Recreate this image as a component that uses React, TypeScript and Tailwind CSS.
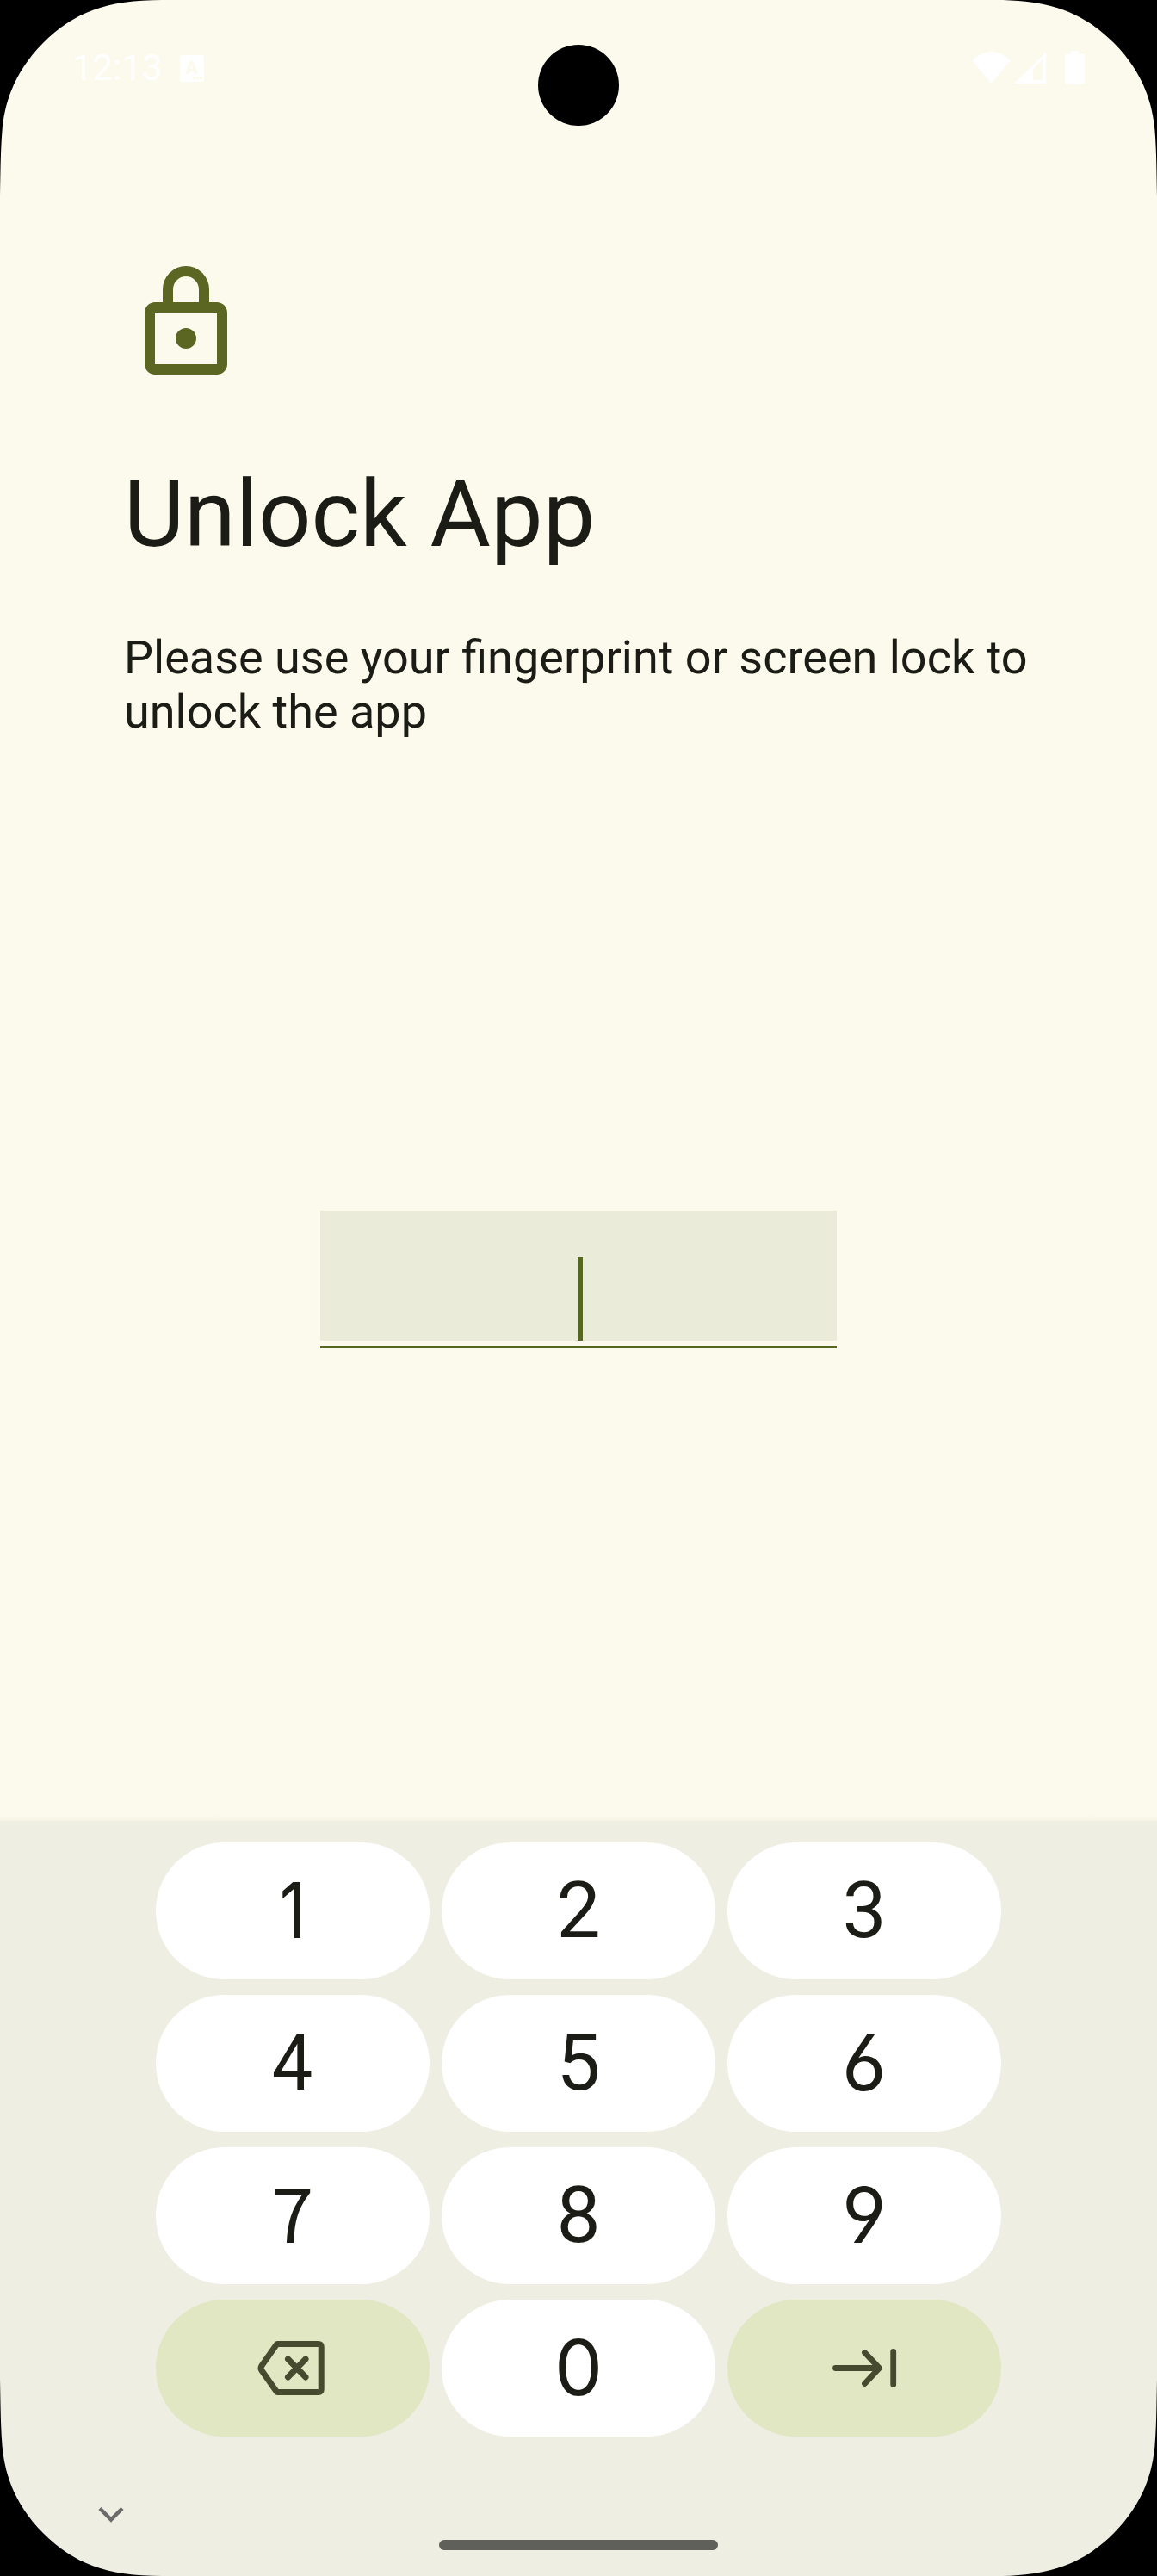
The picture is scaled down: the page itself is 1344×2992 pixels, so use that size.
const keys = ["1", "2", "3", "4", "5", "6", "7", "8", "9", "back", "0", "next"];

const inter = "font-['Inter',sans-serif] text-[89px] -translate-y-px";
const roboto = "font-['Roboto',sans-serif] text-[91px]";
const digitStyles: Record<string, string> = {
  "0": inter,
  "1": "font-['Inter',sans-serif] text-[89px] -translate-y-px scale-x-[0.85]",
  "2": roboto,
  "3": roboto,
  "4": "font-['Roboto',sans-serif] text-[91px] scale-x-[0.93]",
  "5": roboto,
  "6": "font-['Inter',sans-serif] text-[89px] -translate-y-px [font-feature-settings:'cv03']",
  "7": "font-['Noto_Sans_CJK_JP',sans-serif] text-[88px] -translate-y-[7px]",
  "8": roboto,
  "9": "font-['Inter',sans-serif] text-[89px] -translate-y-px [font-feature-settings:'cv04']",
};

function Corner({ className }: { className: string }) {
  return (
    <svg className={`absolute h-[230px] w-[190px] ${className}`} viewBox="0 0 190 230" fill="#000">
      <path d="M0 0V228C0.6 200 0.6 175 2.6 151C5 124 14 86 50 50C86 14 125 0 188 0Z" />
    </svg>
  );
}

function StatusBar() {
  return (
    <header className="flex h-[156px] items-start justify-between pt-[54px] pr-[84px] pl-[84px] text-white">
      <div className="flex items-center">
        <span className="text-[42px] leading-[50px]">12:13</span>
        <div className="mt-px ml-[20px] flex h-[31px] w-[28px] flex-col items-center rounded-[3px] bg-white text-[#fcfaec]">
          <span className="mt-[5px] text-[21px] leading-[20px] font-black">A</span>
          <svg className="mr-[2px] h-[3px] w-[11px] self-end" viewBox="0 0 11 3" fill="currentColor">
            <path d="M0 0h3v3h-3zM4 0h3v3h-3zM8 0h3v3h-3z" />
          </svg>
        </div>
      </div>
      <div className="flex pt-[5px]">
        <svg className="h-[39px] w-[131px]" viewBox="0 0 131 39" fill="#fff">
          <path d="M0.300 11Q22.500 -9 44.700 11L22.500 38Z" />
          <path fillRule="evenodd" d="M49 38L86.300 1V38ZM71 21V34H82.300V9.700Z" />
          <path d="M115 0h9v4h5a2 2 0 0 1 2 2v30.500a2 2 0 0 1-2 2h-19a2 2 0 0 1-2-2V6a2 2 0 0 1 2-2h5z" />
        </svg>
      </div>
    </header>
  );
}

function KeyLabel({ k }: { k: string }) {
  if (k === "back")
    return (
      <svg className="h-[72px] w-[90px]" viewBox="0 0 90 72" fill="none" stroke="#464a2f" strokeWidth="7" strokeLinecap="round" strokeLinejoin="round">
        <path d="M27.500 7.500H74.500Q78.200 7.500 78.200 11V60Q78.200 63.500 74.500 63.500H27.500Q26.500 63.500 26 62.500L8.800 38Q7.300 35.500 8.800 33L26 8.500Q26.500 7.500 27.500 7.500Z" />
        <path d="M39.500 25L60 46M60 25L39.500 46" />
      </svg>
    );
  if (k === "next")
    return (
      <svg className="h-[72px] w-[90px]" viewBox="0 0 90 72" fill="none" stroke="#464a2f" strokeWidth="6.800" strokeLinecap="round" strokeLinejoin="round">
        <path d="M11.500 35.500H62M45.500 17.500L62.500 35.500L45.500 53.500M78.700 16.500V54.500" />
      </svg>
    );
  return <span className={`leading-none ${digitStyles[k]}`}>{k}</span>;
}

export default function App() {
  return (
    <div className="relative flex h-[2992px] w-[1344px] flex-col overflow-hidden bg-[#fcfaec] font-['Roboto',sans-serif] text-[#1c1c16]">
      <StatusBar />
      <main className="flex flex-1 flex-col px-36 pt-[147px]">
        <svg className="size-36" viewBox="0 0 24 24" fill="#5a6621" fillRule="evenodd">
          <path d="M18 8h-1.500V5.500a4.500 4.500 0 0 0-9 0V8H6c-1.100 0-2 .9-2 2v10c0 1.100.9 2 2 2h12c1.100 0 2-.9 2-2V10c0-1.100-.9-2-2-2zM9.500 5.500a2.500 2.500 0 0 1 5 0V8h-5zM18 20H6V10h12zM12 17a2 2 0 1 0 0-4 2 2 0 0 0 0 4z" />
        </svg>
        <h1 className="mt-[84px] text-[108px] leading-[132px]">Unlock App</h1>
        <p className="mt-[69px] text-[54px] leading-[63px]">
          Please use your fingerprint or screen lock to unlock the app
        </p>
        <div className="mt-[548px] flex w-[600px] flex-col self-center border-b-[3px] border-[#566722] pb-[6px]">
          <div className="flex h-[151px] items-end justify-center bg-[#eaebd9]">
            <div className="ml-1 h-[97px] w-[6px] bg-[#566722]" />
          </div>
        </div>
      </main>
      <div className="h-2 bg-linear-to-b from-[#fcfaec] to-[#f5f4e6]" />
      <section className="flex h-[877px] flex-col items-center bg-[#eeeee2] pt-[25px]">
        <div className="grid grid-cols-[repeat(3,318px)] gap-x-[14px] gap-y-[18px]">
          {keys.map((k) => (
            <button
              key={k}
              className={`flex h-[159px] items-center justify-center rounded-full ${
                k === "back" || k === "next" ? "bg-[#e1e7c3]" : "bg-white"
              }`}
            >
              <KeyLabel k={k} />
            </button>
          ))}
        </div>
        <footer className="flex w-full flex-1 items-start justify-between pt-[80px] pr-[114px] pl-[114px]">
          <svg className="h-[20px] w-[30px]" viewBox="0 0 30 20" fill="none" stroke="#6b6b6b" strokeWidth="4.500">
            <path d="M2 3.500L15 16.500L28 3.500" />
          </svg>
          <div className="mt-[40px] h-3 w-[324px] rounded-full bg-[#60605a]" />
          <div className="w-[30px]" />
        </footer>
      </section>
      <div className="absolute top-[52px] left-[625px] size-[94px] rounded-full bg-black" />
      <Corner className="top-0 left-0" />
      <Corner className="top-0 right-0 -scale-x-100" />
      <Corner className="bottom-0 left-0 -scale-y-100" />
      <Corner className="right-0 bottom-0 -scale-100" />
    </div>
  );
}
